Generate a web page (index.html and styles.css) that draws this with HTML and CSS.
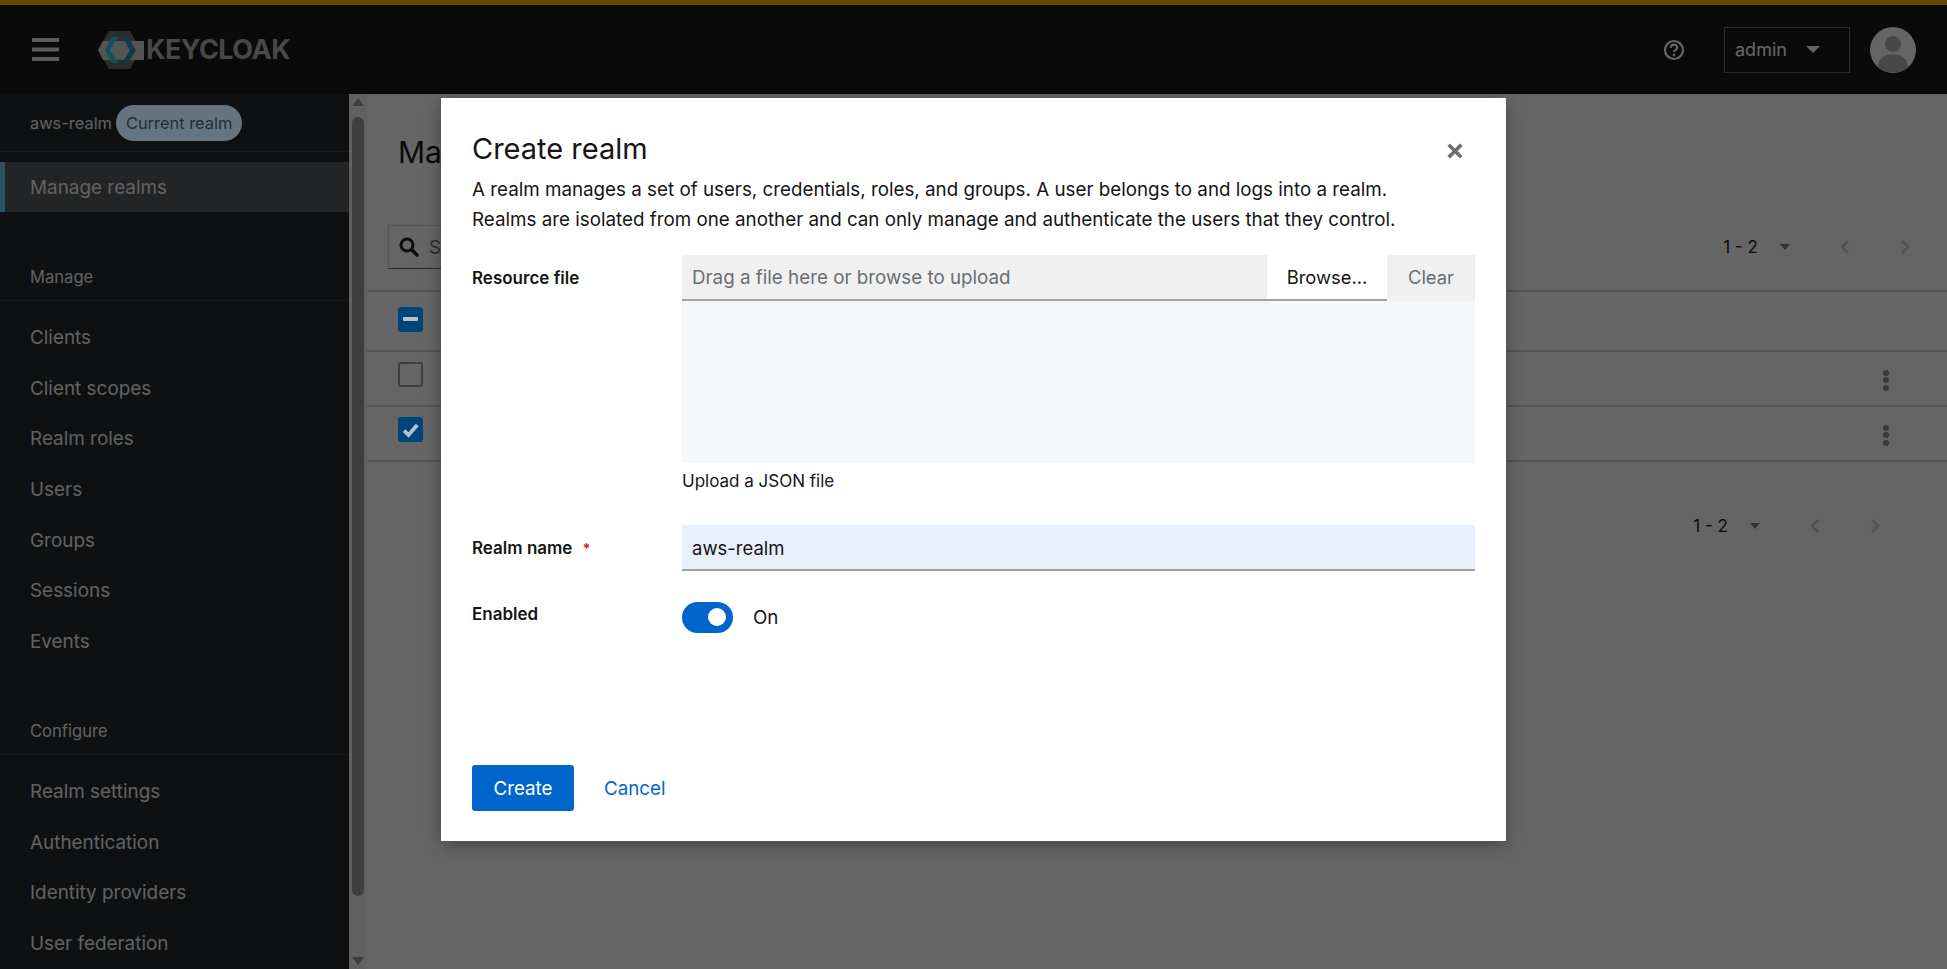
FILE: index.html
```html
<!DOCTYPE html>
<html lang="en">
<head>
  <meta charset="UTF-8" />
  <title>Keycloak Administration Console</title>
  <link rel="stylesheet" href="styles.css">
</head>
<body>
  <div class="app">
    <header class="masthead">
      <svg class="burger" viewBox="0 0 27 23"><path fill="#e8e8e8" d="M0 0h27v4H0zM0 9.500h27v4H0zM0 19h27v4H0z"/></svg>
      <div class="logo">
        <svg class="logo-mark" viewBox="0 0 48 40">
          <path fill="#707070" d="M12 1h21l11 19-11 19H12L1 20z"/>
          <path fill="#d4d4d4" d="M1 20 6 11H47v19H6z"/>
          <path fill="#20d0f0" d="M15 7h6l-8 13 8 13h-6L8 20z"/>
          <path fill="#1898c0" d="M31 7h-6l8 13-8 13h6l8-13z"/>
        </svg>
        <span class="logo-text">KEYCLOAK</span>
      </div>
      <div class="masthead-right">
        <svg class="help" viewBox="0 0 22 22"><circle cx="11" cy="11" r="9" fill="none" stroke="#fff" stroke-width="2.200"/><path fill="none" stroke="#fff" stroke-width="2.200" d="M7.800 8.700c0-4 6.400-4 6.400-.2 0 2.400-3.200 2.200-3.200 4.600"/><circle cx="11" cy="16" r="1.400" fill="#fff"/></svg>
        <div class="user-select"><span>admin</span><i class="caret"></i></div>
        <svg class="avatar" viewBox="0 0 46 46"><circle cx="23" cy="23" r="23" fill="#fff"/><circle cx="23" cy="17" r="8" fill="#b4b4b4"/><path fill="#b4b4b4" d="M8 40c0-17 30-17 30 0a23 23 0 0 1-30 0z"/></svg>
      </div>
    </header>

    <div class="body-row">
      <nav class="sidebar">
        <div class="realm-row"><span>aws-realm</span><span class="realm-badge">Current realm</span></div>
        <a class="nav-item active">Manage realms</a>
        <div class="nav-group">Manage</div>
        <div class="nav-list">
          <a class="nav-item">Clients</a>
          <a class="nav-item">Client scopes</a>
          <a class="nav-item">Realm roles</a>
          <a class="nav-item">Users</a>
          <a class="nav-item">Groups</a>
          <a class="nav-item">Sessions</a>
          <a class="nav-item">Events</a>
        </div>
        <div class="nav-group">Configure</div>
        <div class="nav-list">
          <a class="nav-item">Realm settings</a>
          <a class="nav-item">Authentication</a>
          <a class="nav-item">Identity providers</a>
          <a class="nav-item">User federation</a>
        </div>
      </nav>

      <div class="scrollbar">
        <i class="arrow-up"></i>
        <div class="thumb"></div>
        <i class="arrow-down"></i>
      </div>

      <main class="content">
        <h1 class="page-title">Manage realms</h1>
        <div class="toolbar">
          <div class="search">
            <svg class="search-icon" viewBox="0 0 20 20"><circle cx="8" cy="8" r="6" fill="none" stroke="#1a1a1a" stroke-width="3"/><path stroke="#1a1a1a" stroke-width="3.400" stroke-linecap="round" d="M12.500 12.500 18 18"/></svg>
            <span>Search</span>
          </div>
          <div class="pager">
            <span class="pager-count">1 - 2</span><i class="caret dark"></i>
            <svg class="chev" viewBox="0 0 10 16"><path fill="none" stroke="#d2d2d2" stroke-width="3" d="M8 2 2 8l6 6"/></svg>
            <svg class="chev" viewBox="0 0 10 16"><path fill="none" stroke="#d2d2d2" stroke-width="3" d="m2 2 6 6-6 6"/></svg>
          </div>
        </div>
        <div class="table">
          <div class="row head"><span class="check mixed"></span></div>
          <div class="row"><span class="check"></span><span class="kebab"><i></i><i></i><i></i></span></div>
          <div class="row"><span class="check checked"><svg viewBox="0 0 16 16"><path fill="none" stroke="#b4c2ce" stroke-width="3" d="m2.500 8.500 3.500 3.500 7-8"/></svg></span><span class="kebab"><i></i><i></i><i></i></span></div>
        </div>
        <div class="pager bottom">
          <span class="pager-count">1 - 2</span><i class="caret dark"></i>
          <svg class="chev" viewBox="0 0 10 16"><path fill="none" stroke="#d2d2d2" stroke-width="3" d="M8 2 2 8l6 6"/></svg>
          <svg class="chev" viewBox="0 0 10 16"><path fill="none" stroke="#d2d2d2" stroke-width="3" d="m2 2 6 6-6 6"/></svg>
        </div>
      </main>
    </div>

    <div class="backdrop"></div>

    <div class="modal">
      <button class="close-btn"><svg viewBox="0 0 14 14"><path stroke="#6a6e73" stroke-width="3.200" d="m1.500 1.500 11 11m0-11-11 11"/></svg></button>
      <h2 class="modal-title">Create realm</h2>
      <p class="modal-desc">A realm manages a set of users, credentials, roles, and groups. A user belongs to and logs into a realm.<br>Realms are isolated from one another and can only manage and authenticate the users that they control.</p>

      <div class="form-row file-row">
        <label class="form-label">Resource file</label>
        <div class="form-control">
          <div class="file-bar">
            <span class="file-placeholder">Drag a file here or browse to upload</span>
            <span class="browse-btn">Browse...</span>
            <span class="clear-btn">Clear</span>
          </div>
          <div class="file-area"></div>
          <div class="helper">Upload a JSON file</div>
        </div>
      </div>

      <div class="form-row name-row">
        <label class="form-label">Realm name <span class="req">*</span></label>
        <div class="form-control"><div class="text-input">aws-realm</div></div>
      </div>

      <div class="form-row enabled-row">
        <label class="form-label">Enabled</label>
        <div class="form-control switch-wrap">
          <span class="switch"><i></i></span>
          <span>On</span>
        </div>
      </div>

      <div class="modal-actions">
        <button class="btn-primary">Create</button>
        <button class="btn-link">Cancel</button>
      </div>
    </div>
  </div>
</body>
</html>
```

FILE: styles.css
```css
:root {
  --font: "Inter", "Noto Sans", sans-serif;
  --text: #151515;
}

* {
  box-sizing: border-box;
}

html,
body {
  margin: 0;
  height: 100%;
  overflow: hidden;
}

body {
  font-family: var(--font);
  font-size: 18.800px;
  color: var(--text);
}

.app {
  position: relative;
  height: 969px;
  display: flex;
  flex-direction: column;
  background-color: #fff;
}

/* Top bar */
.masthead {
  height: 94px;
  flex: none;
  display: flex;
  align-items: center;
  padding: 0 31px 0 32px;
  border-top: 5px solid #f8b400;
  background-color: #151515;
}

.burger {
  width: 27px;
  height: 23px;
}

.logo {
  margin-left: 38px;
  display: flex;
  align-items: center;
}

.logo-mark {
  width: 48px;
  height: 40px;
}

.logo-text {
  margin-left: 1px;
  font-size: 27px;
  font-weight: 700;
  letter-spacing: -0.5px;
  color: #b4b4b4;
}

.masthead-right {
  margin-left: auto;
  display: flex;
  align-items: center;
}

.help {
  width: 22px;
  height: 22px;
}

.user-select {
  width: 126px;
  height: 46px;
  margin-left: 39px;
  padding-left: 10px;
  display: flex;
  align-items: center;
  font-size: 18px;
  border: 1px solid #6a6a6a;
  color: #fff;
}

.user-select .caret {
  margin-left: 19px;
}

.avatar {
  width: 46px;
  height: 46px;
  margin-left: 20px;
}

.caret {
  display: inline-block;
  width: 0;
  height: 0;
  border-left: 7px solid transparent;
  border-right: 7px solid transparent;
  border-top: 7px solid #fff;
}

.caret.dark {
  border-left-width: 5.500px;
  border-right-width: 5.500px;
  border-top: 6px solid #7f7f7f;
}

.body-row {
  flex: 1;
  min-height: 0;
  display: flex;
}

/* Sidebar */
.sidebar {
  width: 349px;
  flex: none;
  overflow: hidden;
  background-color: #212427;
  color: #f4f4f4;
}

.realm-row {
  height: 58px;
  padding-left: 30px;
  display: flex;
  align-items: center;
  font-size: 16.400px;
  border-bottom: 1px solid #3a3d40;
}

.realm-badge {
  position: relative;
  z-index: 1;
  margin-left: 4px;
  padding: 0 10px;
  height: 36px;
  display: flex;
  align-items: center;
  border-radius: 18px;
  background-color: #667482;
  color: #1b2d40;
}

.nav-item {
  display: block;
  height: 50.700px;
  line-height: 50px;
  padding-left: 30px;
  font-size: 18.900px;
}

.nav-item.active {
  margin-top: 10px;
  height: 50px;
  line-height: 52px;
  padding-left: 25px;
  border-left: 5px solid #6ecdff;
  background-color: #55585b;
}

.nav-group {
  height: 40px;
  margin-top: 49px;
  padding: 6px 0 0 30px;
  font-size: 16.600px;
  border-bottom: 1px solid #3a3d40;
}

.nav-list {
  padding-top: 12px;
}

.nav-list + .nav-group {
  margin-top: 47px;
}

/* Scrollbar */
.scrollbar {
  width: 18px;
  flex: none;
  padding: 4px 3px;
  display: flex;
  flex-direction: column;
  align-items: center;
  background-color: #f4f4f4;
}

.thumb {
  width: 12px;
  height: 779px;
  margin-top: 11px;
  border-radius: 6px;
  background-color: #9a9a9a;
}

.arrow-up,
.arrow-down {
  width: 0;
  height: 0;
  border-left: 6px solid transparent;
  border-right: 6px solid transparent;
}

.arrow-up {
  border-bottom: 8px solid #9a9a9a;
}

.arrow-down {
  margin-top: auto;
  border-top: 8px solid #9a9a9a;
}

/* Page behind the dialog */
.content {
  flex: 1;
  min-width: 0;
  background-color: #fff;
}

.page-title {
  margin: 0;
  padding: 40px 0 0 31px;
  height: 131px;
  font-size: 30px;
  font-weight: 400;
}

.toolbar {
  height: 65px;
  padding: 0 37px 0 21px;
  display: flex;
  align-items: flex-start;
  justify-content: space-between;
}

.search {
  width: 300px;
  height: 44px;
  padding-left: 10px;
  display: flex;
  align-items: center;
  gap: 10px;
  border: 1px solid #d8d8d8;
  border-bottom-color: #6a6a6a;
  color: #6a6e73;
}

.search-icon {
  width: 20px;
  height: 20px;
}

.pager {
  height: 44px;
  display: flex;
  align-items: center;
}

.pager-count {
  font-size: 17px;
  margin-right: 22px;
}

.chev {
  width: 10px;
  height: 16px;
  margin-left: 50px;
}

.pager.bottom {
  margin: 42px 67px 0 0;
  justify-content: flex-end;
}

.table {
  border-top: 2px solid #d0d0d0;
}

.row {
  height: 55px;
  padding: 0 31px;
  display: flex;
  align-items: center;
  justify-content: space-between;
  border-bottom: 2px solid #d0d0d0;
}

.row.head {
  height: 60px;
}

.check {
  position: relative;
  z-index: 1;
  width: 25px;
  height: 25px;
  margin-top: -8px;
  display: flex;
  align-items: center;
  justify-content: center;
  border: 2px solid #3f3f3f;
  border-radius: 3px;
}

.row.head .check {
  margin-top: -4px;
}

.check svg {
  width: 20px;
  height: 20px;
}

.check.mixed,
.check.checked {
  border: none;
  background-color: #00457a;
}

.check.mixed::before {
  content: "";
  width: 15px;
  height: 4px;
  border-radius: 1px;
  background-color: #b4c2ce;
}

.kebab {
  margin: 3px 27px 0 0;
  display: flex;
  flex-direction: column;
  gap: 1.500px;
}

.kebab i {
  width: 6px;
  height: 6px;
  border-radius: 50%;
  background-color: #8c8c8c;
}

/* Dialog */
.backdrop {
  position: absolute;
  inset: 0;
  background-color: rgba(3, 3, 3, 0.61);
}

.modal {
  position: absolute;
  top: 98px;
  left: 441px;
  width: 1065px;
  height: 743px;
  padding: 26px 31px 30px;
  display: flex;
  flex-direction: column;
  background-color: #fff;
  box-shadow: 0 4px 16px rgba(3, 3, 3, 0.3);
}

.close-btn {
  position: absolute;
  top: 45px;
  right: 43px;
  width: 16px;
  height: 16px;
  padding: 0;
  border: none;
  background: none;
}

.close-btn svg {
  display: block;
  width: 16px;
  height: 16px;
}

.modal-title {
  margin: 0;
  font-size: 29px;
  line-height: 50px;
  font-weight: 400;
}

.modal-desc {
  margin: 1px 0 0;
  line-height: 30px;
}

.form-row {
  display: flex;
}

.form-label {
  width: 210px;
  flex: none;
  font-size: 17px;
  font-weight: 600;
}

.form-control {
  flex: 1;
  min-width: 0;
}

.file-row {
  margin-top: 20px;
}

.file-row .form-label {
  padding-top: 13px;
}

.file-bar {
  height: 46px;
  display: flex;
  align-items: stretch;
  background-color: #f0f0f0;
}

.file-placeholder {
  flex: 1;
  padding-left: 10px;
  line-height: 45px;
  color: #6a6e73;
  border-bottom: 2px solid #a0a3a6;
}

.browse-btn {
  width: 120px;
  text-align: center;
  line-height: 45px;
  font-size: 18.400px;
  background-color: #fff;
  border-bottom: 2px solid #a0a3a6;
}

.clear-btn {
  width: 88px;
  text-align: center;
  line-height: 45px;
  font-size: 18.400px;
  color: #6a6e73;
}

.file-area {
  height: 162px;
  background-color: #f6f7f9;
}

.helper {
  margin-top: 7px;
  font-size: 17px;
  line-height: 22px;
}

.name-row {
  margin-top: 33px;
}

.name-row .form-label {
  padding-top: 13px;
}

.req {
  margin-left: 6px;
  font-size: 14px;
  color: #c9190b;
}

.text-input {
  height: 46px;
  padding-left: 10px;
  line-height: 46px;
  font-size: 18.500px;
  background-color: #e8f0fc;
  border-bottom: 2px solid #a0a3a6;
}

.enabled-row {
  margin-top: 31px;
}

.enabled-row .form-label {
  padding-top: 2px;
}

.switch-wrap {
  display: flex;
  align-items: center;
  gap: 20px;
  height: 31px;
}

.switch {
  width: 51px;
  height: 31px;
  padding: 6px 7px 6px 0;
  display: flex;
  justify-content: flex-end;
  border-radius: 16px;
  background-color: #0066cc;
}

.switch i {
  width: 18px;
  height: 18px;
  border-radius: 50%;
  background-color: #fff;
}

.modal-actions {
  margin-top: auto;
  display: flex;
  align-items: center;
  gap: 10px;
}

.btn-primary {
  width: 102px;
  height: 46px;
  border: none;
  border-radius: 3px;
  font: inherit;
  color: #fff;
  background-color: #0066cc;
}

.btn-link {
  padding: 0 20px;
  border: none;
  background: none;
  font: inherit;
  color: #0066cc;
}
```
